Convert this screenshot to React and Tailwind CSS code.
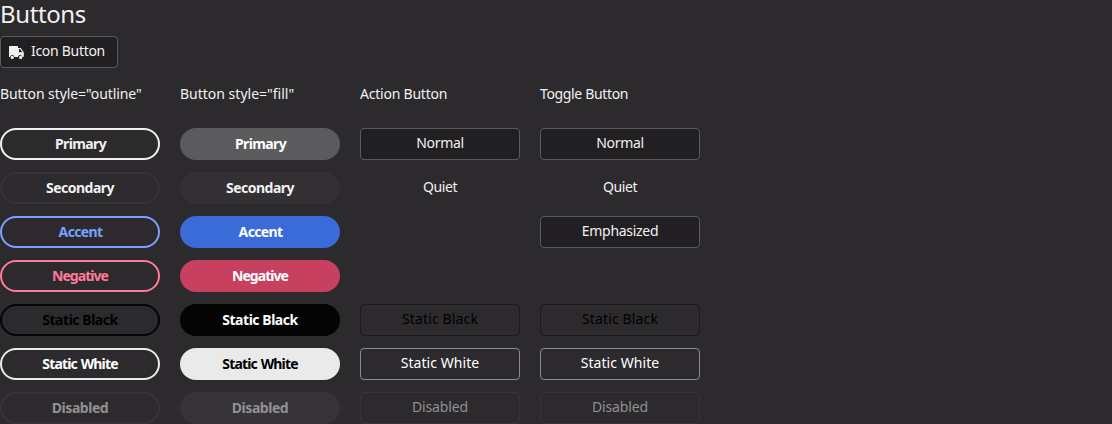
const pill = 'flex h-8 w-40 items-center justify-center rounded-full border-2 text-[14px] leading-none font-bold whitespace-nowrap';
const box = 'flex h-8 w-40 items-center justify-center rounded-[4px] border text-[14px] leading-none pb-0.5 whitespace-nowrap';

const outline = [
  ['Primary', 'border-[#f1f1f1] text-[#f1f1f1]', 'ml-px tracking-[-0.6px]'],
  ['Secondary', 'border-[#353337] text-[#f1f1f1]', 'tracking-[-0.5px]'],
  ['Accent', 'border-[#78a2ff] text-[#78a2ff]', 'ml-px tracking-[-0.65px]'],
  ['Negative', 'border-[#ff7b9b] text-[#ff7b9b]', 'tracking-[-0.95px]'],
  ['Static Black', 'border-[#050406] text-black', 'tracking-[-0.46px]'],
  ['Static White', 'border-[#eaeaea] text-white', 'tracking-[-0.85px] [word-spacing:1px]'],
  ['Disabled', 'border-[#363438] text-[#919092]', 'tracking-[-0.46px]'],
];
const fill = [
  ['Primary', 'border-transparent bg-[#5b5b5d] text-white', 'ml-px tracking-[-0.6px]'],
  ['Secondary', 'border-transparent bg-[#323033] text-[#f1f1f1]', 'tracking-[-0.5px]'],
  ['Accent', 'border-transparent bg-[#3a6bd9] text-white', 'ml-px tracking-[-0.65px]'],
  ['Negative', 'border-transparent bg-[#c74060] text-white', 'tracking-[-0.95px]'],
  ['Static Black', 'border-transparent bg-[#040404] text-white', 'tracking-[-0.46px]'],
  ['Static White', 'border-transparent bg-[#eaeaea] text-black', 'tracking-[-0.85px] [word-spacing:1px]'],
  ['Disabled', 'border-transparent bg-[#363438] text-[#919092]', 'tracking-[-0.46px]'],
];
const normal = ['Normal', 'border-[#5b5a5d] bg-[#221f22] text-[#f1f1f1]', 'tracking-[-0.3px]'];
const quiet = ['Quiet', 'border-transparent text-[#f1f1f1]', 'tracking-[-0.4px]'];
const statics = [
  ['Static Black', 'border-[#1b191c] text-black', 'tracking-[0.15px]'],
  ['Static White', 'border-[#8b8a8c] text-white', 'tracking-[0.05px]'],
  ['Disabled', 'border-[#363438] text-[#919092]', 'tracking-[-0.15px]'],
];
const action = [normal, quiet, null, null, ...statics];
const toggle = [
  normal,
  quiet,
  ['Emphasized', 'border-[#5b5a5d] bg-[#221f22] text-[#f1f1f1]', 'tracking-[-0.3px]'],
  null,
  ...statics,
];

function Column({ title, spacing, items, base }) {
  return (
    <section className="w-40">
      <h2 className={`mb-6 h-5 text-[14px] leading-5 whitespace-nowrap ${spacing}`}>{title}</h2>
      <div className="flex flex-col gap-3">
        {items.map((item, i) =>
          item ? (
            <button key={i} className={`${base} ${item[1]}`}>
              <span className={item[2]}>{item[0]}</span>
            </button>
          ) : (
            <div key={i} className="h-8" />
          ),
        )}
      </div>
    </section>
  );
}

export default function App() {
  return (
    <main className="h-[424px] w-full overflow-hidden bg-[#2d2a2e] font-['Noto_Sans',sans-serif] text-[#f1f1f1]">
      <h1 className="h-9 text-[24px] leading-[28px] tracking-[-0.4px]">Buttons</h1>
      <button className="flex h-8 w-[118px] items-center rounded-[4px] border border-[#5b5a5d] bg-[#221f22] pl-2 text-[14px] leading-none whitespace-nowrap">
        <svg className="mt-0.5 mr-[7px] h-[14px] w-[15px]" viewBox="0 0 15 14" fill="#f1f1f1">
          <path d="M.5 0h8a.5.5 0 0 1 .5.5V2h2.200c.3 0 .5.1.7.300L14.500 6c.2.300.3.500.3.800V9.900c0 .6-.4 1-1 1h-.4a2.300 2.300 0 0 0-4.500 0H5.500a2.300 2.300 0 0 0-4.500 0H.5a.5.5 0 0 1-.5-.5V.5A.5.5 0 0 1 .5 0zM10 3.100V6.200h3.400L11 3.100z" fillRule="evenodd" />
          <circle cx="3.250" cy="11.400" r="1.600" />
          <circle cx="11.650" cy="11.400" r="1.600" />
        </svg>
        <span className="pb-0.5 tracking-[-0.3px]">Icon Button</span>
      </button>
      <div className="mt-4 flex gap-5">
        <Column title={'Button style="outline"'} spacing="tracking-[-0.08px]" items={outline} base={pill} />
        <Column title={'Button style="fill"'} spacing="tracking-[0px]" items={fill} base={pill} />
        <Column title="Action Button" spacing="tracking-[-0.22px]" items={action} base={box} />
        <Column title="Toggle Button" spacing="tracking-[-0.35px]" items={toggle} base={box} />
      </div>
    </main>
  );
}
